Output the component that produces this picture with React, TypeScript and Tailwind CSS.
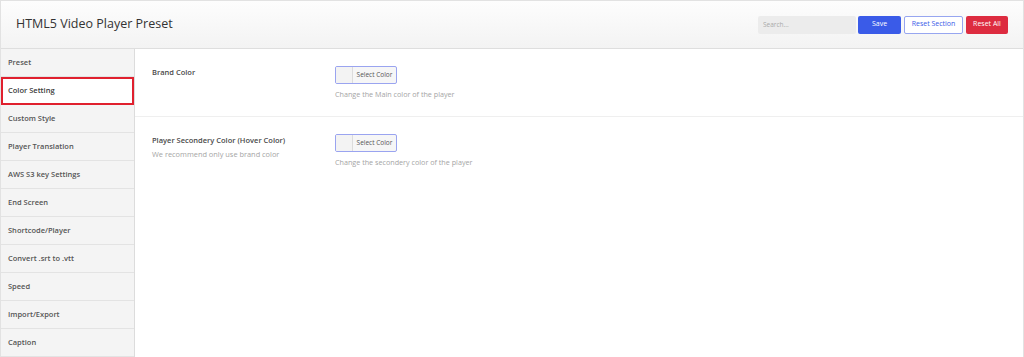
import React from "react";

const menu = [
  "Preset",
  "Color Setting",
  "Custom Style",
  "Player Translation",
  "AWS S3 key Settings",
  "End Screen",
  "Shortcode/Player",
  "Convert .srt to .vtt",
  "Speed",
  "Import/Export",
  "Caption",
];

function ColorPicker() {
  return (
    <div className="flex h-[18px] w-[62px] overflow-hidden rounded-[2px] border border-[#9aa4f0] bg-[#f6f6f6]">
      <div className="w-[17px] border-r border-[#dcdcdc] bg-[#f3f3f3]" />
      <div className="flex flex-1 items-center justify-center text-[6.5px] text-[#555]">Select Color</div>
    </div>
  );
}

export default function App() {
  return (
    <div
      className="h-[357px] w-[1024px] overflow-hidden bg-white"
      style={{ fontFamily: '"Open Sans", "Noto Sans", sans-serif' }}
    >
      <div className="flex h-full flex-col border-t border-r border-l border-[#e2e2e2]">
        <header className="flex h-[48px] shrink-0 items-center justify-between border-b border-[#dedede] bg-gradient-to-b from-[#fdfdfd] to-[#f3f3f3] pl-[15px] pr-[15px]">
          <h1 className="text-[12.5px] text-[#333]">HTML5 Video Player Preset</h1>
          <div className="flex items-center gap-[2px]">
            <input
              placeholder="Search..."
              className="h-[18px] w-[98px] rounded-[2px] bg-[#ececec] px-[5px] text-[6.5px] text-[#666] outline-none placeholder:text-[#aaa]"
            />
            <button className="h-[18px] w-[43px] rounded-[2px] bg-[#3a5be8] text-[7px] text-white">Save</button>
            <button className="ml-[1px] h-[18px] w-[59px] rounded-[2px] border border-[#97a6f0] bg-white text-[7px] text-[#3a5be8]">
              Reset Section
            </button>
            <button className="ml-[1px] h-[18px] w-[42px] rounded-[2px] bg-[#dd2c40] text-[7px] text-white">Reset All</button>
          </div>
        </header>
        <div className="flex flex-1">
          <nav className="w-[134px] shrink-0 border-r border-[#dcdcdc] bg-[#f4f4f4]">
            {menu.map((m) => (
              <div
                key={m}
                className={
                  m === "Color Setting"
                    ? "flex h-[28px] items-center border-2 border-[#e0202e] bg-white pl-[5px] text-[7.5px] font-semibold text-[#3a3a3a]"
                    : "flex h-[28px] items-center border-b border-[#e3e3e3] pl-[7px] text-[7.5px] font-semibold text-[#555]"
                }
              >
                {m}
              </div>
            ))}
          </nav>
          <main className="flex-1">
            <div className="flex h-[68px] border-b border-[#efefef] pl-[17px] pt-[17px]">
              <div className="w-[183px] pt-[1px] text-[7.5px] font-semibold text-[#4a4a4a]">Brand Color</div>
              <div>
                <ColorPicker />
                <div className="mt-[5px] text-[7.2px] text-[#a5a5a5]">Change the Main color of the player</div>
              </div>
            </div>
            <div className="flex pl-[17px] pt-[17px]">
              <div className="w-[183px] pt-[1px]">
                <div className="text-[7.5px] font-semibold text-[#4a4a4a]">Player Secondery Color (Hover Color)</div>
                <div className="mt-[3px] text-[7.4px] text-[#a5a5a5]">We recommend only use brand color</div>
              </div>
              <div>
                <ColorPicker />
                <div className="mt-[5px] text-[7.2px] text-[#a5a5a5]">Change the secondery color of the player</div>
              </div>
            </div>
          </main>
        </div>
      </div>
    </div>
  );
}
